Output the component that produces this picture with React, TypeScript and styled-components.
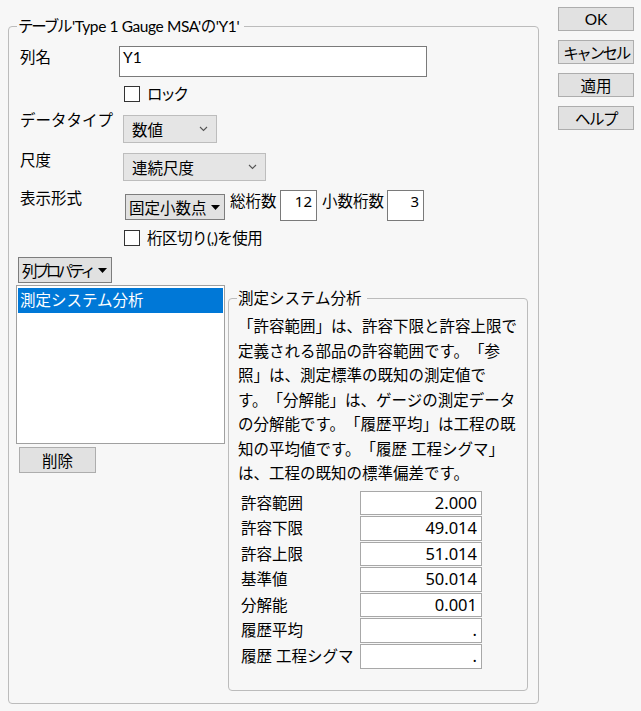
import React from 'react';
import styled, { createGlobalStyle } from 'styled-components';

const GlobalStyle = createGlobalStyle`
  html, body {
    margin: 0;
    padding: 0;
    background: #f7f7f7;
  }
  body {
    font-family: "Lato", "Noto Sans CJK JP", sans-serif;
    font-size: 15.5px;
    color: #000;
  }
  * {
    box-sizing: border-box;
  }
`;

const Page = styled.div`
  display: flex;
  align-items: flex-start;
  width: 641px;
  height: 711px;
  padding: 7px 0 0 8px;
`;

const Group = styled.fieldset<{ $w: number; $h: number; $mt?: number; $ml?: number }>`
  margin: ${p => p.$mt ?? 0}px 0 0 ${p => p.$ml ?? 0}px;
  padding: 0;
  width: ${p => p.$w}px;
  height: ${p => p.$h}px;
  border: 1px solid #bcbcbc;
  border-radius: 4px;
  min-width: 0;
`;

const Legend = styled.legend<{ $ls?: number }>`
  margin-left: 8px;
  padding: 0 5px 0 1px;
  line-height: 20px;
  letter-spacing: ${p => p.$ls ?? 0}px;
  white-space: nowrap;
`;

// Meiryo UI draws kana narrower than Noto CJK; tighten those runs
const Tight = styled.span<{ $ls: number }>`
  letter-spacing: ${p => p.$ls}px;
`;

const Content = styled.div<{ $pad: string }>`
  padding: ${p => p.$pad};
  display: flex;
  flex-direction: column;
`;

const Row = styled.div<{ $mt?: number }>`
  display: flex;
  align-items: flex-start;
  margin-top: ${p => p.$mt ?? 0}px;
`;

const Label = styled.div<{ $mt?: number }>`
  width: 103px;
  flex: none;
  padding-left: 4px;
  margin-top: ${p => p.$mt ?? 0}px;
  line-height: 20px;
  white-space: nowrap;
`;

const TextBox = styled.div<{ $w: number }>`
  width: ${p => p.$w}px;
  height: 31px;
  background: #fff;
  border: 1px solid #7a7a7a;
  padding: 0 3px;
  line-height: 20px;
`;

const NumBox = styled(TextBox)`
  text-align: right;
  padding: 0 4px 0 0;
  font-family: "Noto Sans", sans-serif;
  font-size: 15px;
`;

const Check = styled.label<{ $ml: number }>`
  display: flex;
  align-items: center;
  gap: 7px;
  height: 16px;
  margin-left: ${p => p.$ml}px;
  line-height: 16px;
  white-space: nowrap;
`;

const CheckBox = styled.span`
  width: 16px;
  height: 16px;
  flex: none;
  background: #fff;
  border: 1px solid #333;
`;

const Select = styled.div<{ $w: number; $ml: number }>`
  width: ${p => p.$w}px;
  height: 28px;
  margin-left: ${p => p.$ml}px;
  display: flex;
  align-items: center;
  justify-content: space-between;
  padding: 0 8px;
  background: #e5e5e5;
  border: 1px solid #bdbdbd;
  white-space: nowrap;
`;

const Combo = styled.div<{ $w: number; $ml: number; $mt: number; $h: number }>`
  width: ${p => p.$w}px;
  height: ${p => p.$h}px;
  margin: ${p => p.$mt}px 0 0 ${p => p.$ml}px;
  display: flex;
  align-items: center;
  justify-content: space-between;
  padding: 0 4px 0 3px;
  background: #e1e1e1;
  border: 1px solid #7d7d7d;
  white-space: nowrap;
  svg {
    flex: none;
  }
`;

const InlineLabel = styled.span<{ $w: number; $ml: number }>`
  width: ${p => p.$w}px;
  margin: 1px 0 0 ${p => p.$ml}px;
  line-height: 20px;
  white-space: nowrap;
`;

const Button = styled.div<{ $w: number; $h: number; $ml?: number; $mt?: number }>`
  width: ${p => p.$w}px;
  height: ${p => p.$h}px;
  margin: ${p => p.$mt ?? 0}px 0 0 ${p => p.$ml ?? 0}px;
  display: flex;
  align-items: center;
  justify-content: center;
  background: #e1e1e1;
  border: 1px solid #adadad;
  white-space: nowrap;
`;

const SideButtons = styled.div`
  display: flex;
  flex-direction: column;
  gap: 9px;
  margin-left: 19px;
`;

const Split = styled.div`
  display: flex;
  align-items: flex-start;
  margin-top: 2px;
`;

const ListCol = styled.div`
  display: flex;
  flex-direction: column;
`;

const ListBox = styled.div`
  width: 209px;
  height: 159px;
  background: #fff;
  border: 1px solid #a0a0a0;
  padding: 2px 1px;
`;

const ListItem = styled.div<{ $selected?: boolean }>`
  height: 25px;
  padding-left: 2px;
  line-height: 25px;
  background: ${p => (p.$selected ? '#0078d7' : 'transparent')};
  color: ${p => (p.$selected ? '#fff' : '#000')};
`;

const Desc = styled.div`
  line-height: 24.5px;
  white-space: nowrap;
  text-spacing-trim: space-all;
`;

const PropTable = styled.div`
  display: grid;
  grid-template-columns: 119px 122px;
  row-gap: 1px;
  margin: 5px 0 0 3px;
`;

const PropLabel = styled.div`
  line-height: 24.6px;
  white-space: nowrap;
`;

const PropValue = styled.div`
  height: 24.6px;
  background: #fff;
  border: 1px solid #a8a8a8;
  text-align: right;
  padding-right: 4px;
  line-height: 22.6px;
  font-family: "Noto Sans", sans-serif;
  font-size: 16.5px;
`;

const Chevron = () => (
  <svg width="9" height="6" viewBox="0 0 9 6">
    <polyline points="1,1 4.5,4.5 8,1" fill="none" stroke="#555" strokeWidth="1.1" />
  </svg>
);

const Triangle = () => (
  <svg width="9" height="5" viewBox="0 0 9 5">
    <polygon points="0,0 9,0 4.5,5" fill="#000" />
  </svg>
);

const description = [
  '「許容範囲」は、許容下限と許容上限で',
  '定義される部品の許容範囲です。「参',
  '照」は、測定標準の既知の測定値で',
  'す。「分解能」は、ゲージの測定データ',
  'の分解能です。「履歴平均」は工程の既',
  '知の平均値です。「履歴 工程シグマ」',
  'は、工程の既知の標準偏差です。',
];

const properties = [
  { label: '許容範囲', value: '2.000' },
  { label: '許容下限', value: '49.014' },
  { label: '許容上限', value: '51.014' },
  { label: '基準値', value: '50.014' },
  { label: '分解能', value: '0.001' },
  { label: '履歴平均', value: '.' },
  { label: '履歴 工程シグマ', value: '.' },
];

export default function App() {
  return (
    <>
      <GlobalStyle />
      <Page>
        <Group $w={531} $h={688} $mt={9}>
          <Legend $ls={-0.4}>
            <Tight $ls={-2.2}>テーブ</Tight>ル'Type 1 Gauge MSA'の'Y1'
          </Legend>
          <Content $pad="10px 10px 0 7px">
            <Row>
              <Label $mt={1}>列名</Label>
              <TextBox $w={308}>Y1</TextBox>
            </Row>
            <Row $mt={9}>
              <Label />
              <Check $ml={5}>
                <CheckBox />
                <Tight $ls={-2.3}>ロック</Tight>
              </Check>
            </Row>
            <Row $mt={13}>
              <Label $mt={-5}>データタイプ</Label>
              <Select $w={94} $ml={4}>
                数値
                <Chevron />
              </Select>
            </Row>
            <Row $mt={10}>
              <Label $mt={-3}>尺度</Label>
              <Select $w={143} $ml={4}>
                連続尺度
                <Chevron />
              </Select>
            </Row>
            <Row $mt={9}>
              <Label $mt={-2}>表示形式</Label>
              <Combo $w={100} $h={26} $ml={6} $mt={4}>
                固定小数点
                <Triangle />
              </Combo>
              <InlineLabel $w={50} $ml={5}>総桁数</InlineLabel>
              <NumBox $w={37}>12</NumBox>
              <InlineLabel $w={65} $ml={5}>小数桁数</InlineLabel>
              <NumBox $w={37}>3</NumBox>
            </Row>
            <Row $mt={9}>
              <Label />
              <Check $ml={5}>
                <CheckBox />
                <Tight $ls={-0.5}>桁区切り(,)を使用</Tight>
              </Check>
            </Row>
            <Row $mt={11}>
              <Combo $w={94} $h={26} $ml={2} $mt={0}>
                <Tight $ls={-3.6}>列プロパティ</Tight>
                <Triangle />
              </Combo>
            </Row>
            <Split>
              <ListCol>
                <ListBox>
                  <ListItem $selected>測定システム分析</ListItem>
                </ListBox>
                <Button $w={77} $h={26} $ml={3} $mt={3}>削除</Button>
              </ListCol>
              <Group $w={300} $h={403} $mt={3} $ml={3}>
                <Legend>測定システム分析</Legend>
                <Content $pad="6px 0 0 9px">
                  <Desc>
                    {description.map(line => (
                      <div key={line}>{line}</div>
                    ))}
                  </Desc>
                  <PropTable>
                    {properties.map(p => (
                      <React.Fragment key={p.label}>
                        <PropLabel>{p.label}</PropLabel>
                        <PropValue>{p.value}</PropValue>
                      </React.Fragment>
                    ))}
                  </PropTable>
                </Content>
              </Group>
            </Split>
          </Content>
        </Group>
        <SideButtons>
          <Button $w={76} $h={24}>OK</Button>
          <Button $w={76} $h={24}>
            <Tight $ls={-2.4}>キャンセル</Tight>
          </Button>
          <Button $w={76} $h={24}>適用</Button>
          <Button $w={76} $h={24}>
            <Tight $ls={-1.5}>ヘルプ</Tight>
          </Button>
        </SideButtons>
      </Page>
    </>
  );
}
